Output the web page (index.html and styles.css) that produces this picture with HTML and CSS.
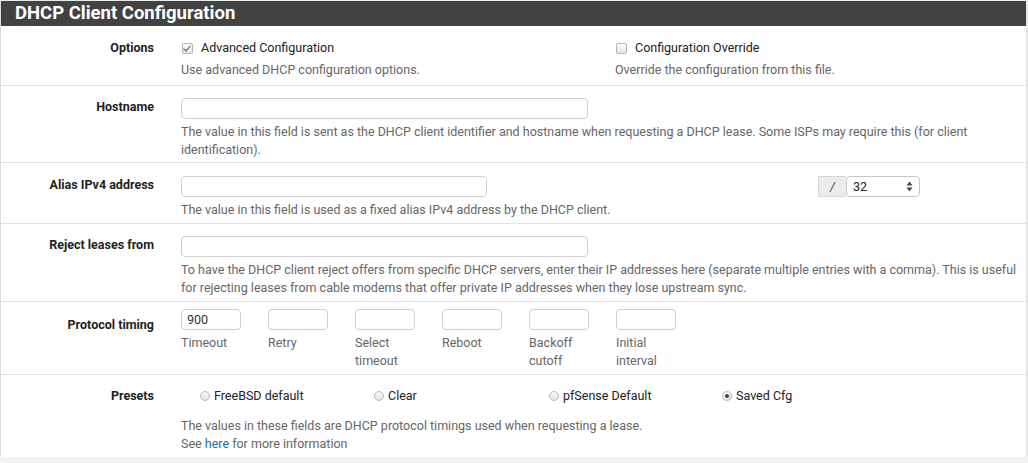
FILE: index.html
```html
<!DOCTYPE html>
<html>
<head>
<meta charset="utf-8">
<link rel="stylesheet" href="styles.css">
</head>
<body>
<div class="panel">
  <div class="panel-heading">DHCP Client Configuration</div>
  <div class="row row-options">
    <div class="lbl">Options</div>
    <div class="content two-col">
      <div class="col">
        <div class="check-line"><span class="cb checked"></span>Advanced Configuration</div>
        <div class="help">Use advanced DHCP configuration options.</div>
      </div>
      <div class="col">
        <div class="check-line"><span class="cb"></span>Configuration Override</div>
        <div class="help">Override the configuration from this file.</div>
      </div>
    </div>
  </div>
  <div class="row row-host">
    <div class="lbl">Hostname</div>
    <div class="content">
      <input class="field field-wide" type="text">
      <div class="help">The value in this field is sent as the DHCP client identifier and hostname when requesting a DHCP lease. Some ISPs may require this (for client identification).</div>
    </div>
  </div>
  <div class="row row-alias">
    <div class="lbl">Alias IPv4 address</div>
    <div class="content">
      <div class="alias-line">
        <input class="field field-mid" type="text">
        <div class="cidr">
          <span class="addon">/</span>
          <span class="select">32<svg width="7" height="11" viewBox="0 0 7 11"><path d="M3.5 0.5 L6.5 4.5 H0.5 Z M3.5 10.5 L6.5 6.5 H0.5 Z" fill="#444"/></svg></span>
        </div>
      </div>
      <div class="help">The value in this field is used as a fixed alias IPv4 address by the DHCP client.</div>
    </div>
  </div>
  <div class="row row-reject">
    <div class="lbl">Reject leases from</div>
    <div class="content">
      <input class="field field-wide" type="text">
      <div class="help">To have the DHCP client reject offers from specific DHCP servers, enter their IP addresses here (separate multiple entries with a comma). This is useful for rejecting leases from cable modems that offer private IP addresses when they lose upstream sync.</div>
    </div>
  </div>
  <div class="row row-timing">
    <div class="lbl">Protocol timing</div>
    <div class="content timing">
      <div class="tcol"><input class="field field-small" type="text" value="900"><div class="help">Timeout</div></div>
      <div class="tcol"><input class="field field-small" type="text"><div class="help">Retry</div></div>
      <div class="tcol"><input class="field field-small" type="text"><div class="help">Select<br>timeout</div></div>
      <div class="tcol"><input class="field field-small" type="text"><div class="help">Reboot</div></div>
      <div class="tcol"><input class="field field-small" type="text"><div class="help">Backoff<br>cutoff</div></div>
      <div class="tcol"><input class="field field-small" type="text"><div class="help">Initial<br>interval</div></div>
    </div>
  </div>
  <div class="row row-presets">
    <div class="lbl">Presets</div>
    <div class="content">
      <div class="radios">
        <div class="radio-line"><span class="rb"></span>FreeBSD default</div>
        <div class="radio-line"><span class="rb"></span>Clear</div>
        <div class="radio-line"><span class="rb"></span>pfSense Default</div>
        <div class="radio-line"><span class="rb checked"></span>Saved Cfg</div>
      </div>
      <div class="help presets-help">The values in these fields are DHCP protocol timings used when requesting a lease.<br>See <a href="#">here</a> for more information</div>
    </div>
  </div>
</div>
</body>
</html>
```
FILE: styles.css
```css
html, body {
  margin: 0;
  padding: 0;
}
body {
  background: #f2f2f2;
  font-family: Roboto, "Liberation Sans", Arial, sans-serif;
  font-size: 12.5px;
  line-height: 18px;
  color: #222;
}
.panel {
  width: 1025px;
  margin-top: 1px;
  background: #fff;
  border-left: 1px solid #dcdcdc;
  box-shadow: 0 1px 3px rgba(0,0,0,0.18);
}
.panel-heading {
  background: #424242;
  color: #fff;
  font-size: 18.5px;
  font-weight: bold;
  height: 25px;
  line-height: 25px;
  padding-left: 14px;
}
.row {
  display: flex;
  border-top: 1px solid #e2e2e2;
}
.panel-heading + .row { border-top: none; }
.lbl {
  width: 153px;
  padding-right: 27px;
  text-align: right;
  font-weight: bold;
  color: #222;
  flex-shrink: 0;
}
.content {
  width: 845px;
}
.help {
  color: #666;
}
.two-col {
  display: flex;
}
.two-col .col {
  width: 434px;
  flex-shrink: 0;
}
.check-line {
  display: flex;
  align-items: center;
  color: #222;
}
.cb {
  display: inline-block;
  width: 9px;
  height: 9px;
  border: 1px solid #b5b5b5;
  border-radius: 2px;
  background: linear-gradient(#fdfdfd, #e4e4e4);
  margin: 0 8px 0 1px;
  position: relative;
}
.cb.checked::after {
  content: "";
  position: absolute;
  left: 2px;
  top: 0px;
  width: 3px;
  height: 6px;
  border: solid #555;
  border-width: 0 1.5px 1.5px 0;
  transform: rotate(40deg);
}
.row-options { padding: 13px 0 6px; }
.row-options .help { margin-top: 4px; }

.field {
  display: block;
  box-sizing: border-box;
  height: 21px;
  border: 1px solid #cfcfcf;
  border-radius: 4px;
  background: #fff;
  font-family: inherit;
  font-size: 12.5px;
  color: #333;
  padding: 0 5px;
  margin: 0;
  outline: none;
}
.field-wide { width: 407px; }
.field-mid { width: 306px; }
.field-small { width: 60px; }

.row-host { padding: 12px 0 3px; }
.row-host .help, .row-reject .help, .row-alias .help { margin-top: 4px; }

.row-alias { padding: 13px 0 4px; }
.alias-line {
  display: flex;
  align-items: center;
}
.cidr {
  display: flex;
  margin-left: 331px;
}
.addon {
  box-sizing: border-box;
  width: 28px;
  height: 21px;
  background: #ececec;
  border: 1px solid #d6d6d6;
  border-right: none;
  text-align: center;
  line-height: 19px;
  color: #444;
  font-style: italic;
}
.select {
  box-sizing: border-box;
  width: 74px;
  height: 21px;
  border: 1px solid #c8c8c8;
  border-radius: 4px;
  display: flex;
  align-items: center;
  justify-content: space-between;
  padding: 0 6px 0 6px;
  color: #222;
}

.row-reject { padding: 12px 0 4px; }

.row-timing { padding: 7px 0 4px; }
.row-timing .lbl { padding-top: 7px; }
.timing {
  display: flex;
}
.tcol {
  width: 87px;
}
.tcol .help { margin-top: 4px; }

.row-presets { padding: 12px 0 4px; }
.radios {
  display: grid;
  grid-template-columns: 174px 175px 173px 174px;
  padding-left: 19px;
}
.radio-line {
  display: flex;
  align-items: center;
  color: #222;
}
.rb {
  display: inline-block;
  box-sizing: border-box;
  width: 10px;
  height: 10px;
  border: 1px solid #b8b8b8;
  border-radius: 50%;
  background: linear-gradient(#fafafa, #e2e2e2);
  margin-right: 4px;
  position: relative;
}
.rb.checked::after {
  content: "";
  position: absolute;
  left: 2px;
  top: 2px;
  width: 4px;
  height: 4px;
  border-radius: 50%;
  background: #444;
}
.presets-help { margin-top: 12px; }
a { color: #1e6cb0; text-decoration: none; }
```
